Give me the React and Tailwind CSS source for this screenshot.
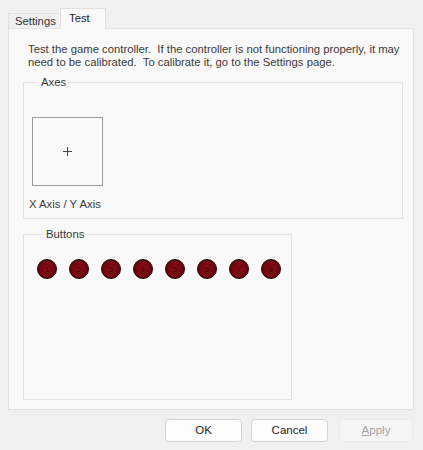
const buttons = [1, 2, 3, 4, 5, 6, 7, 8];

function Tab({ label, active }) {
  return active ? (
    <div className="h-[21px] w-[46px] -mb-px pl-[8px] pt-[3px] bg-[#f9f9f9] border border-b-0 border-[#e1e1e1] text-[#1f1f1f] relative z-10">
      {label}
    </div>
  ) : (
    <div className="h-[15px] w-[52px] pl-[6px] pt-[1px] border border-b-0 border-r-0 border-[#e1e1e1] text-[#333]">
      {label}
    </div>
  );
}

function DialogButton({ label, disabled, className = '' }) {
  return (
    <button
      disabled={disabled}
      className={`h-[23px] rounded-[4px] border text-[11.5px] leading-none ${
        disabled
          ? 'bg-[#f5f5f5] border-[#ececec] text-[#a3a3a3]'
          : 'bg-[#fdfdfd] border-[#d3d3d3] text-[#1f1f1f]'
      } ${className}`}
    >
      {label}
    </button>
  );
}

export default function App() {
  return (
    <div className="w-[423px] h-[450px] bg-[#f0f0f0] flex flex-col text-[11.3px] leading-[13px] text-[#333] font-['Liberation_Sans',Arial,sans-serif]">
      <div className="h-[28px] pl-[8px] flex items-end">
        <Tab label="Settings" />
        <Tab label="Test" active />
      </div>

      <div className="mx-[8px] mr-[9px] h-[382px] bg-[#f9f9f9] border border-[#e3e3e3] pl-[14px] pr-[10px] pt-[14px]">
        <p className="pl-[5px] text-[#3a3a3a] whitespace-pre">
          {'Test the game controller.  If the controller is not functioning properly, it may\nneed to be calibrated.  To calibrate it, go to the Settings page.'}
        </p>

        <fieldset className="mt-[6px] h-[144px] border border-[#e3e3e3] pl-[8px]">
          <legend className="ml-[6px] px-[3px] pt-[1px] text-[#3a3a3a]">Axes</legend>
          <div className="mt-[28px] w-[71px] h-[69px] border border-[#9a9a9a] bg-[#fafafa] flex items-center justify-center">
            <svg width="9" height="9" viewBox="0 0 9 9">
              <path d="M4.5 0v9M0 4.5h9" stroke="#444" strokeWidth="1" />
            </svg>
          </div>
          <div className="mt-[12px] -ml-[3px] text-[#3a3a3a]">X Axis / Y Axis</div>
        </fieldset>

        <fieldset className="mt-[8px] w-[269px] h-[173px] border border-[#e3e3e3] pl-[13px]">
          <legend className="ml-[6px] px-[3px] pt-[1px] text-[#3a3a3a]">Buttons</legend>
          <div className="mt-[18px] flex gap-[12px]">
            {buttons.map((n) => (
              <div
                key={n}
                className="w-[20px] h-[20px] rounded-full bg-[radial-gradient(circle,#8a0c16_0%,#6e0710_60%,#3a0306_100%)] border border-[#1e0203] flex items-center justify-center text-[7px] leading-none text-[#3a0307]"
              >
                {n}
              </div>
            ))}
          </div>
        </fieldset>
      </div>

      <div className="flex justify-end gap-[9px] pr-[10px] pt-[9px]">
        <DialogButton label="OK" className="w-[77px]" />
        <DialogButton label="Cancel" className="w-[77px]" />
        <DialogButton
          label={<><span className="underline">A</span>pply</>}
          disabled
          className="w-[74px] ml-[2px]"
        />
      </div>
    </div>
  );
}
